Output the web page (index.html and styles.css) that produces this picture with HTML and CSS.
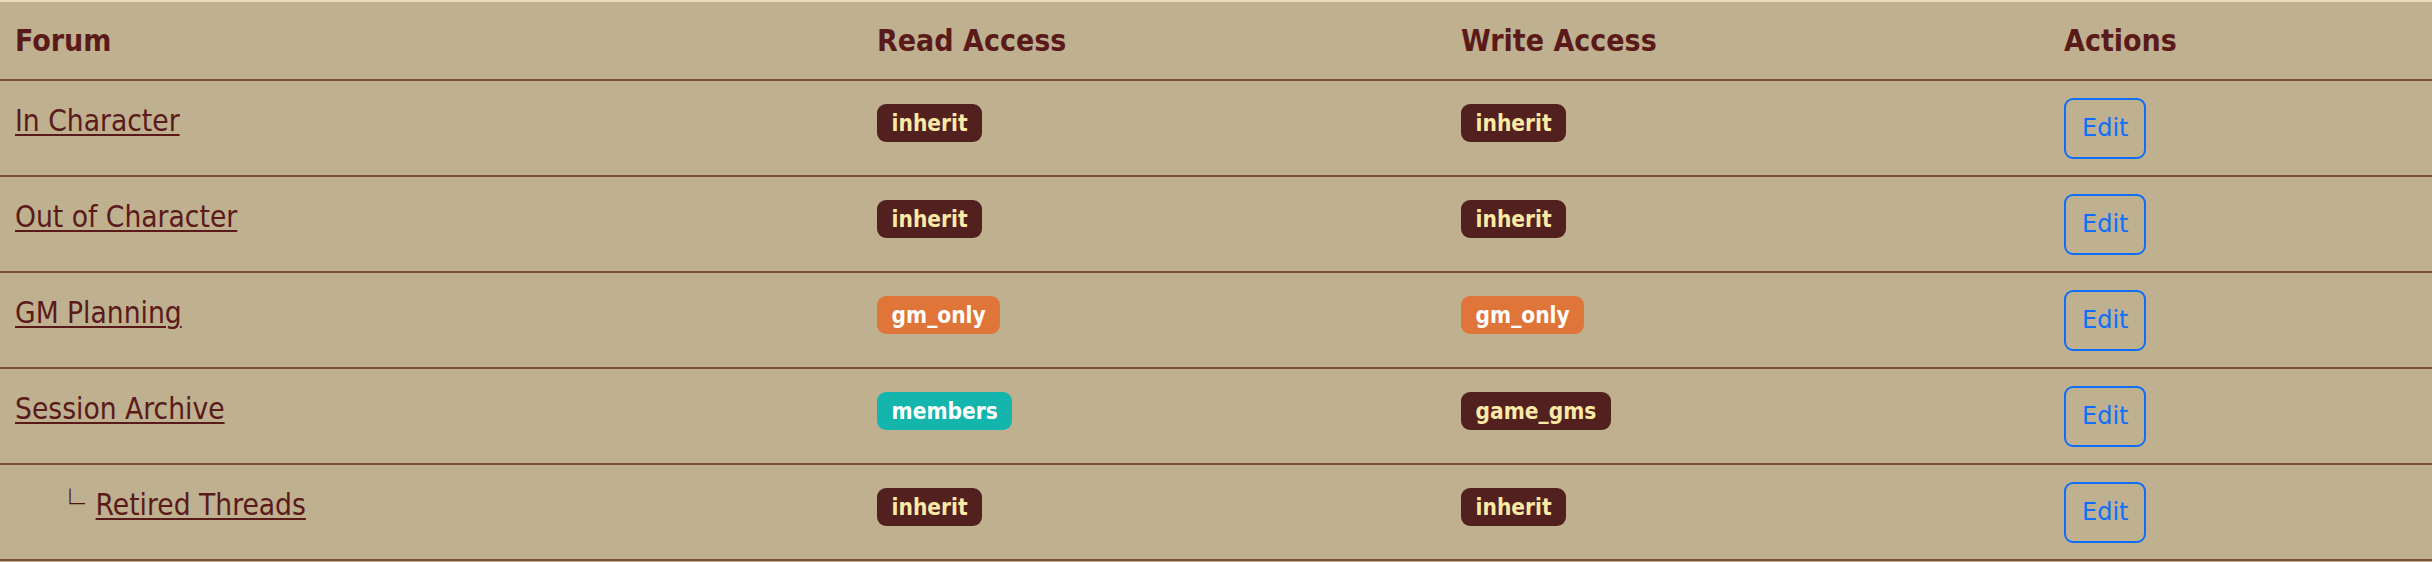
FILE: index.html
```html
<!DOCTYPE html>
<html lang="en">
<head>
<meta charset="utf-8">
<title>Forum permissions</title>
<link rel="stylesheet" href="styles.css">
</head>
<body>
<div class="page">
  <table class="perm-table">
    <colgroup>
      <col class="c-forum">
      <col class="c-read">
      <col class="c-write">
      <col class="c-actions">
    </colgroup>
    <thead>
      <tr>
        <th>Forum</th>
        <th>Read Access</th>
        <th>Write Access</th>
        <th>Actions</th>
      </tr>
    </thead>
    <tbody>
      <tr>
        <td><a class="forum-link" href="#">In Character</a></td>
        <td><span class="badge badge-dark">inherit</span></td>
        <td><span class="badge badge-dark">inherit</span></td>
        <td><button class="btn-edit" type="button">Edit</button></td>
      </tr>
      <tr>
        <td><a class="forum-link" href="#">Out of Character</a></td>
        <td><span class="badge badge-dark">inherit</span></td>
        <td><span class="badge badge-dark">inherit</span></td>
        <td><button class="btn-edit" type="button">Edit</button></td>
      </tr>
      <tr>
        <td><a class="forum-link" href="#">GM Planning</a></td>
        <td><span class="badge badge-orange">gm_only</span></td>
        <td><span class="badge badge-orange">gm_only</span></td>
        <td><button class="btn-edit" type="button">Edit</button></td>
      </tr>
      <tr>
        <td><a class="forum-link" href="#">Session Archive</a></td>
        <td><span class="badge badge-teal">members</span></td>
        <td><span class="badge badge-dark">game_gms</span></td>
        <td><button class="btn-edit" type="button">Edit</button></td>
      </tr>
      <tr>
        <td class="child"><span class="tree">└</span> <a class="forum-link" href="#">Retired Threads</a></td>
        <td><span class="badge badge-dark">inherit</span></td>
        <td><span class="badge badge-dark">inherit</span></td>
        <td><button class="btn-edit" type="button">Edit</button></td>
      </tr>
    </tbody>
  </table>
</div>
</body>
</html>
```

FILE: styles.css
```css
html, body {
  margin: 0;
  padding: 0;
}

body {
  background: #bfb08f;
  font-family: "DejaVu Sans Condensed", "DejaVu Sans", sans-serif;
  font-stretch: condensed;
  color: #5b1a1a;
}

.page {
  border-top: 2px solid #e9ddbd;
}

.perm-table {
  width: 100%;
  border-collapse: collapse;
  table-layout: fixed;
  font-size: 30px;
  line-height: 45px;
}

.c-forum { width: 863px; }
.c-read { width: 584px; }
.c-write { width: 603px; }
.c-actions { width: auto; }

.perm-table th {
  text-align: left;
  font-weight: bold;
  color: #5b1a1a;
  padding: 16px 14px 16px 15px;
  border-bottom: 2px solid #7a5230;
  vertical-align: top;
}

.perm-table td {
  padding: 16.5px 14px 16.5px 15px;
  border-bottom: 2px solid #7a5230;
  vertical-align: top;
}

.perm-table th + th,
.perm-table td + td {
  padding-left: 14px;
}

.perm-table td.child {
  padding-left: 55px;
}

.forum-link {
  color: #5b1a1a;
  font-size: 29.6px;
  text-decoration: underline;
  text-decoration-thickness: 2px;
  text-underline-offset: 3px;
}

.tree {
  font-family: "Noto Sans CJK JP", sans-serif;
  font-stretch: normal;
  font-weight: bold;
  font-size: 30px;
  line-height: 1;
  margin-right: 2px;
  color: #4e1414;
}

.badge {
  display: inline-block;
  font-size: 22.5px;
  font-weight: bold;
  line-height: 1;
  padding: 7.9px 14.6px;
  border-radius: 9px;
  white-space: nowrap;
}

.badge-dark {
  background: #52211f;
  color: #fbe9a6;
}

.badge-orange {
  background: #e07539;
  color: #ffffff;
}

.badge-teal {
  background: #13b5ad;
  color: #ffffff;
}

.btn-edit {
  display: inline-block;
  vertical-align: top;
  font-family: "DejaVu Sans", sans-serif;
  font-stretch: normal;
  font-size: 24px;
  line-height: 37px;
  padding: 10px 16px;
  color: #0d6efd;
  background: transparent;
  border: 2px solid #0d6efd;
  border-radius: 9px;
  cursor: pointer;
}
```
